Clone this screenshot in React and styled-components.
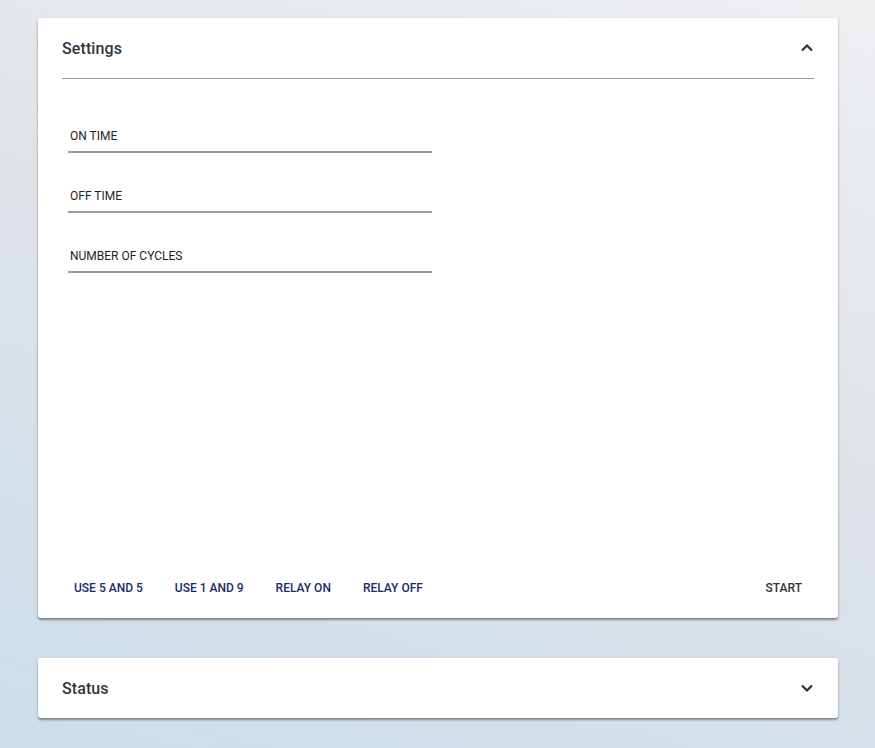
import React, { useState } from 'react'
import styled, { createGlobalStyle } from 'styled-components'

const GlobalStyle = createGlobalStyle`
  html, body {
    margin: 0;
    padding: 0;
  }
  body {
    font-family: Roboto, 'Liberation Sans', sans-serif;
    background: linear-gradient(200deg, #eef0f2 0%, #dfe3e8 45%, #cbdeed 100%);
    min-height: 748px;
  }
`

const Page = styled.div`
  display: flex;
  flex-direction: column;
  gap: 40px;
  width: 800px;
  padding: 18px 0 30px 38px;
`

const Card = styled.section`
  background: #fff;
  border-radius: 3px;
  box-shadow: 0 2px 2px rgba(0, 0, 0, 0.35), 0 1px 4px rgba(0, 0, 0, 0.1);
  display: flex;
  flex-direction: column;
  height: ${p => (p.$open ? '600px' : '60px')};
`

const Header = styled.header`
  display: flex;
  align-items: center;
  justify-content: space-between;
  height: 60px;
  margin: 0 24px;
  border-bottom: ${p => (p.$open ? '1px solid #9a9a9a' : 'none')};
  cursor: pointer;
`

const Title = styled.h2`
  margin: 0;
  font-size: 16px;
  font-weight: 500;
  color: #33353a;
  letter-spacing: 0.1px;
`

const Chevron = styled.svg`
  width: 14px;
  height: 14px;
`

const Body = styled.div`
  flex: 1;
  display: flex;
  flex-direction: column;
  padding: 39px 30px 0;
`

const Field = styled.label`
  display: flex;
  flex-direction: column;
  width: 364px;
  height: 60px;
  box-sizing: border-box;
  padding-top: 11px;
`

const FieldLabel = styled.span`
  font-size: 12px;
  font-weight: 400;
  color: #1e1e1e;
  padding-left: 2px;
  line-height: 14px;
`

const Input = styled.input`
  border: none;
  border-bottom: 2px solid #9c9c9c;
  outline: none;
  height: 6px;
  padding: 0;
  margin-top: 2px;
  background: transparent;
`

const Actions = styled.div`
  display: flex;
  align-items: center;
  padding: 0 20px 18px 20px;
  height: 24px;
`

const Button = styled.button`
  border: none;
  background: none;
  font-family: inherit;
  font-size: 12px;
  font-weight: 500;
  padding: 4px 16px;
  color: ${p => (p.$primary ? '#1b2a6b' : '#333')};
  margin-left: ${p => (p.$push ? 'auto' : '0')};
  cursor: pointer;
`

const Up = () => (
  <Chevron viewBox="0 0 14 14">
    <path d="M2 9.5 L7 4.5 L12 9.5" fill="none" stroke="#2a2e3a" strokeWidth="2.2" />
  </Chevron>
)

const Down = () => (
  <Chevron viewBox="0 0 14 14">
    <path d="M2 4.5 L7 9.5 L12 4.5" fill="none" stroke="#2a2e3a" strokeWidth="2.2" />
  </Chevron>
)

export default function App() {
  const [settingsOpen, setSettingsOpen] = useState(true)
  const [statusOpen, setStatusOpen] = useState(false)

  const fields = ['ON TIME', 'OFF TIME', 'NUMBER OF CYCLES']
  const buttons = ['USE 5 AND 5', 'USE 1 AND 9', 'RELAY ON', 'RELAY OFF']

  return (
    <>
      <GlobalStyle />
      <Page>
        <Card $open={settingsOpen}>
          <Header $open={settingsOpen} onClick={() => setSettingsOpen(!settingsOpen)}>
            <Title>Settings</Title>
            {settingsOpen ? <Up /> : <Down />}
          </Header>
          {settingsOpen && (
            <>
              <Body>
                {fields.map(f => (
                  <Field key={f}>
                    <FieldLabel>{f}</FieldLabel>
                    <Input type="text" />
                  </Field>
                ))}
              </Body>
              <Actions>
                {buttons.map(b => (
                  <Button key={b} $primary>
                    {b}
                  </Button>
                ))}
                <Button $push>START</Button>
              </Actions>
            </>
          )}
        </Card>
        <Card $open={statusOpen}>
          <Header $open={statusOpen} onClick={() => setStatusOpen(!statusOpen)}>
            <Title>Status</Title>
            {statusOpen ? <Up /> : <Down />}
          </Header>
        </Card>
      </Page>
    </>
  )
}
